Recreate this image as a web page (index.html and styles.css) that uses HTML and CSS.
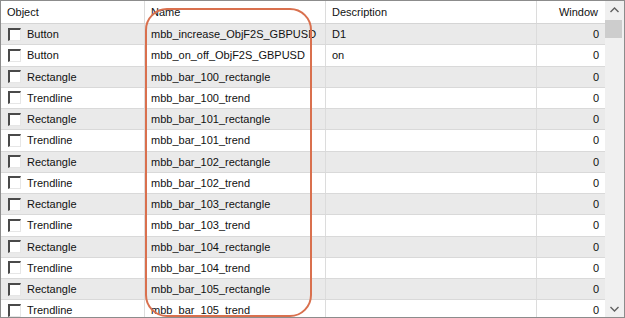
FILE: index.html
```html
<!DOCTYPE html>
<html>
<head>
<meta charset="utf-8">
<link rel="stylesheet" href="styles.css">
</head>
<body>
<div class="frame">
  <div class="list">
    <div class="row head">
      <div class="cell c-obj">Object</div>
      <div class="cell c-name">Name</div>
      <div class="cell c-desc">Description</div>
      <div class="cell c-win">Window</div>
    </div>
    <div class="row odd"><div class="cell c-obj"><span class="cb"></span>Button</div><div class="cell c-name">mbb_increase_ObjF2S_GBPUSD</div><div class="cell c-desc">D1</div><div class="cell c-win">0</div></div>
    <div class="row"><div class="cell c-obj"><span class="cb"></span>Button</div><div class="cell c-name">mbb_on_off_ObjF2S_GBPUSD</div><div class="cell c-desc">on</div><div class="cell c-win">0</div></div>
    <div class="row odd"><div class="cell c-obj"><span class="cb"></span>Rectangle</div><div class="cell c-name">mbb_bar_100_rectangle</div><div class="cell c-desc"></div><div class="cell c-win">0</div></div>
    <div class="row"><div class="cell c-obj"><span class="cb"></span>Trendline</div><div class="cell c-name">mbb_bar_100_trend</div><div class="cell c-desc"></div><div class="cell c-win">0</div></div>
    <div class="row odd"><div class="cell c-obj"><span class="cb"></span>Rectangle</div><div class="cell c-name">mbb_bar_101_rectangle</div><div class="cell c-desc"></div><div class="cell c-win">0</div></div>
    <div class="row"><div class="cell c-obj"><span class="cb"></span>Trendline</div><div class="cell c-name">mbb_bar_101_trend</div><div class="cell c-desc"></div><div class="cell c-win">0</div></div>
    <div class="row odd"><div class="cell c-obj"><span class="cb"></span>Rectangle</div><div class="cell c-name">mbb_bar_102_rectangle</div><div class="cell c-desc"></div><div class="cell c-win">0</div></div>
    <div class="row"><div class="cell c-obj"><span class="cb"></span>Trendline</div><div class="cell c-name">mbb_bar_102_trend</div><div class="cell c-desc"></div><div class="cell c-win">0</div></div>
    <div class="row odd"><div class="cell c-obj"><span class="cb"></span>Rectangle</div><div class="cell c-name">mbb_bar_103_rectangle</div><div class="cell c-desc"></div><div class="cell c-win">0</div></div>
    <div class="row"><div class="cell c-obj"><span class="cb"></span>Trendline</div><div class="cell c-name">mbb_bar_103_trend</div><div class="cell c-desc"></div><div class="cell c-win">0</div></div>
    <div class="row odd"><div class="cell c-obj"><span class="cb"></span>Rectangle</div><div class="cell c-name">mbb_bar_104_rectangle</div><div class="cell c-desc"></div><div class="cell c-win">0</div></div>
    <div class="row"><div class="cell c-obj"><span class="cb"></span>Trendline</div><div class="cell c-name">mbb_bar_104_trend</div><div class="cell c-desc"></div><div class="cell c-win">0</div></div>
    <div class="row odd"><div class="cell c-obj"><span class="cb"></span>Rectangle</div><div class="cell c-name">mbb_bar_105_rectangle</div><div class="cell c-desc"></div><div class="cell c-win">0</div></div>
    <div class="row"><div class="cell c-obj"><span class="cb"></span>Trendline</div><div class="cell c-name">mbb_bar_105_trend</div><div class="cell c-desc"></div><div class="cell c-win">0</div></div>
  </div>
  <div class="scrollbar">
    <div class="arrow">
      <svg width="9" height="6" viewBox="0 0 9 6"><path d="M0.5 5 L4.5 1 L8.5 5" fill="none" stroke="#606060" stroke-width="1.4"/></svg>
    </div>
    <div class="track"><div class="thumb"></div></div>
    <div class="arrow">
      <svg width="9" height="6" viewBox="0 0 9 6"><path d="M0.5 1 L4.5 5 L8.5 1" fill="none" stroke="#606060" stroke-width="1.4"/></svg>
    </div>
  </div>
  <div class="highlight"></div>
</div>
</body>
</html>
```

FILE: styles.css
```css
html, body {
  margin: 0;
  padding: 0;
  background: #ffffff;
}
.frame {
  position: relative;
  width: 625px;
  height: 318px;
  box-sizing: border-box;
  border: 1px solid #8c8c8c;
  display: flex;
  overflow: hidden;
  font-family: "Liberation Sans", Arial, sans-serif;
  font-size: 11px;
  color: #111111;
}
.list {
  width: 604px;
  flex: none;
  display: flex;
  flex-direction: column;
  overflow: hidden;
}
.row {
  display: grid;
  grid-template-columns: 144px 181px 211px 68px;
  height: 21.25px;
  flex: none;
  box-sizing: border-box;
  border-bottom: 1px solid #d9d9d9;
  background: #ffffff;
}
.row.odd {
  background: #eaeaea;
}
.row.head {
  height: 23px;
  background: #ffffff;
  border-bottom: 1px solid #d5d5d5;
}
.cell {
  display: flex;
  align-items: center;
  box-sizing: border-box;
  border-right: 1px solid #dcdcdc;
  padding-left: 6px;
  white-space: nowrap;
  overflow: hidden;
}
.row .cell.c-obj {
  padding-left: 6px;
}
.row:not(.head) .c-obj {
  padding-left: 7px;
}
.c-win {
  justify-content: flex-end;
  padding-left: 0;
  padding-right: 6px;
  border-right: none;
}
.head .c-win {
  padding-right: 7px;
}
.cb {
  width: 13px;
  height: 13px;
  box-sizing: border-box;
  background: #ffffff;
  border-top: 2px solid #4a4a4a;
  border-left: 2px solid #4a4a4a;
  border-right: 1px solid #e6e6e6;
  border-bottom: 1px solid #e6e6e6;
  margin-right: 6px;
  flex: none;
}
.scrollbar {
  flex: 1;
  background: #f0f0f0;
  display: flex;
  flex-direction: column;
}
.arrow {
  height: 17px;
  display: flex;
  align-items: center;
  justify-content: center;
  flex: none;
}
.track {
  flex: 1;
  padding-top: 2px;
}
.thumb {
  width: 17px;
  height: 18px;
  background: #cdcdcd;
}
.highlight {
  position: absolute;
  left: 144px;
  top: 7px;
  width: 167px;
  height: 309px;
  box-sizing: border-box;
  border: 2px solid #d9704e;
  border-radius: 22px;
  pointer-events: none;
}
```
